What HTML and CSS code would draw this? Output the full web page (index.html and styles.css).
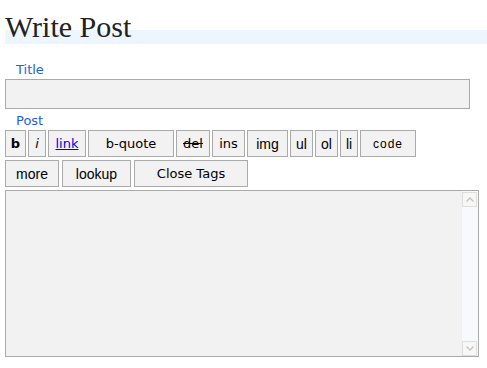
FILE: index.html
```html
<!DOCTYPE html>
<html lang="en">

<head>
    <meta charset="UTF-8" />
    <meta name="viewport" content="width=device-width, initial-scale=1.0" />
    <title>Write Post</title>
    <link rel="stylesheet" href="styles.css">
</head>

<body>
    <h1 class="page-title">Write Post</h1>
    <form class="post-form">
        <label class="field-label" for="title">Title</label>
        <input class="title-input" type="text" id="title" />

        <label class="field-label post-label" for="content">Post</label>
        <div class="toolbar">
            <button type="button" class="tag-btn btn-b">b</button>
            <button type="button" class="tag-btn btn-i">i</button>
            <button type="button" class="tag-btn btn-link">link</button>
            <button type="button" class="tag-btn btn-quote">b-quote</button>
            <button type="button" class="tag-btn btn-del">del</button>
            <button type="button" class="tag-btn btn-ins">ins</button>
            <button type="button" class="tag-btn arial btn-img">img</button>
            <button type="button" class="tag-btn arial btn-ul">ul</button>
            <button type="button" class="tag-btn arial btn-ol">ol</button>
            <button type="button" class="tag-btn arial btn-li">li</button>
            <button type="button" class="tag-btn btn-code">code</button>
        </div>
        <div class="toolbar toolbar-second">
            <button type="button" class="tag-btn arial btn-more">more</button>
            <button type="button" class="tag-btn arial btn-lookup">lookup</button>
            <button type="button" class="tag-btn btn-close">Close Tags</button>
        </div>

        <div class="editor">
            <textarea id="content"></textarea>
            <div class="scrollbar">
                <span class="scroll-btn">
                    <svg width="8" height="5" viewBox="0 0 8 5"><path d="M0.5 4.5 L4 1 L7.5 4.5" fill="none" stroke="#c4c4c4" stroke-width="1.4"/></svg>
                </span>
                <span class="scroll-btn">
                    <svg width="8" height="5" viewBox="0 0 8 5"><path d="M0.5 0.5 L4 4 L7.5 0.5" fill="none" stroke="#c4c4c4" stroke-width="1.4"/></svg>
                </span>
            </div>
        </div>
    </form>
</body>

</html>
```

FILE: styles.css
```css
body {
    margin: 0;
    padding: 10px 0 0 5px;
    font-family: "DejaVu Sans", Verdana, sans-serif;
}

.page-title {
    margin: 0;
    font: normal 30px/34px "Liberation Serif", "Times New Roman", serif;
    color: #222;
    background: linear-gradient(to bottom, transparent 20px, #edf5fe 20px);
}

.post-form {
    margin-top: 18px;
}

.field-label {
    display: block;
    padding-left: 11px;
    font-size: 13px;
    line-height: 16px;
    color: #1f5ee6;
}

.post-label {
    margin-top: 4px;
}

.title-input {
    display: block;
    box-sizing: border-box;
    width: 465px;
    height: 30px;
    margin: 1px 0 0;
    border: 1px solid #aaa;
    background: #f2f2f2;
}

.toolbar {
    display: flex;
    gap: 2px;
    margin-top: 1px;
}

.toolbar-second {
    gap: 3px;
    margin-top: 3px;
}

.tag-btn {
    box-sizing: border-box;
    height: 27px;
    padding: 0;
    border: 1px solid #aaa;
    border-radius: 0;
    background: #f2f2f2;
    color: #000;
    font: 13px "DejaVu Sans", Verdana, sans-serif;
}

.arial {
    font: 14px "Liberation Sans", Arial, sans-serif;
}

.btn-b { width: 21px; font-weight: bold; }
.btn-i { width: 18px; font-style: italic; }
.btn-link { width: 38px; color: #0000ee; text-decoration: underline; }
.btn-quote { width: 86px; }
.btn-del { width: 34px; text-decoration: line-through; }
.btn-ins { width: 33px; }
.btn-img { width: 41px; }
.btn-ul { width: 23px; }
.btn-ol { width: 23px; }
.btn-li { width: 18px; }
.btn-code {
    width: 56px;
    font: 12px "Liberation Sans", Arial, sans-serif;
    letter-spacing: 1px;
}

.btn-more { width: 54px; }
.btn-lookup { width: 69px; }
.btn-close { width: 114px; }

.editor {
    display: flex;
    box-sizing: border-box;
    width: 474px;
    height: 167px;
    margin-top: 3px;
    border: 1px solid #aaa;
    background: #f2f2f2;
}

.editor textarea {
    flex: 1;
    border: 0;
    margin: 0;
    background: transparent;
    resize: none;
    outline: none;
}

.scrollbar {
    display: flex;
    flex-direction: column;
    justify-content: space-between;
    width: 16px;
    padding: 1px 0 0;
    background: #f8f9fc;
    border-left: 1px solid #eef0f4;
}

.scroll-btn {
    display: flex;
    align-items: center;
    justify-content: center;
    box-sizing: border-box;
    width: 15px;
    height: 15px;
    border: 1px solid #dedede;
    background: #f7f7f5;
}
```
